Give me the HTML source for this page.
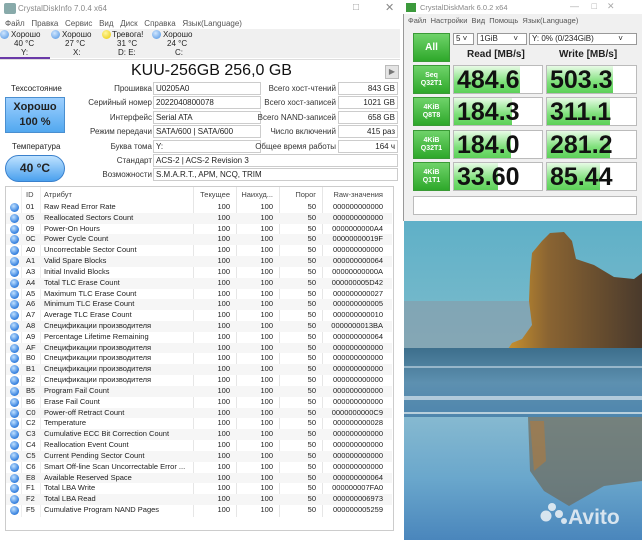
<!DOCTYPE html>
<html><head><meta charset="utf-8"><style>
*{margin:0;padding:0;box-sizing:border-box}
body{width:642px;height:540px;overflow:hidden;background:#fff;position:relative;font-family:"Liberation Sans","DejaVu Sans",sans-serif;font-size:8px;color:#222}
.a{position:absolute;white-space:nowrap}
.lbl{position:absolute;text-align:right;width:150px;font-size:8px;color:#333}
.box{position:absolute;border:1px solid #ccc;height:13px;font-size:8px;line-height:11px;padding:0 2px;background:#fff}
.r{text-align:right}
.row{position:absolute;left:6px;width:386px;height:10.8px;font-size:7.5px;line-height:10.8px}
.row span{position:absolute}
.dot{width:9px;height:9px;border-radius:50%;background:radial-gradient(circle at 40% 35%,#bfe0ff,#3a84e0 65%,#1d5bb8);top:1px;left:4px}
.btn{position:absolute;left:413px;width:37px;background:linear-gradient(#6fd36a,#2ea82a);border:1px solid #3a9a36;color:#fff;font-weight:bold;text-align:center;font-size:7px;line-height:8px}
.cell{position:absolute;height:29px;border:1px solid #bbb;background:#fff;overflow:hidden}
.cell i{position:absolute;left:0;top:0;bottom:0;background:linear-gradient(#e8fbe6,#7ee07a 60%,#5cd058)}
.cell b{position:absolute;left:3px;top:1px;font-size:25px;line-height:27px;color:#111;font-family:"Liberation Sans",sans-serif}
</style></head><body>
<div class="a" style="left:4px;top:3px;width:12px;height:11px;background:#8aa;border-radius:2px"></div>
<div class="a" style="left:18px;top:4px;font-size:8px;color:#888">CrystalDiskInfo 7.0.4 x64</div>
<div class="a" style="left:353px;top:2px;font-size:10px;color:#999">□</div>
<div class="a" style="left:385px;top:1px;font-size:11px;color:#888">✕</div>
<div class="a" style="left:5px;top:19px;font-size:8px;color:#555">Файл&nbsp;&nbsp; Правка&nbsp;&nbsp; Сервис&nbsp;&nbsp; Вид&nbsp;&nbsp; Диск&nbsp;&nbsp; Справка&nbsp;&nbsp; Язык(Language)</div>
<div class="a" style="left:0;top:29px;width:400px;height:29px;background:#f0f0f0"></div>
<div class="a" style="left:0;top:57px;width:50px;height:2px;background:#6a3aa8"></div>
<div class="a" style="left:0;top:59px;width:400px;height:1px;background:#ddd"></div>
<div class="a" style="left:0;top:30px;width:9px;height:9px;border-radius:50%;background:radial-gradient(circle at 40% 35%,#cfe6ff,#4a90e0)"></div>
<div class="a" style="left:11px;top:30px;font-size:8px;color:#222">Хорошо</div>
<div class="a" style="left:14px;top:39px;font-size:8px">40 °C</div><div class="a" style="left:21px;top:48px;font-size:8px">Y:</div>
<div class="a" style="left:51px;top:30px;width:9px;height:9px;border-radius:50%;background:radial-gradient(circle at 40% 35%,#cfe6ff,#4a90e0)"></div>
<div class="a" style="left:62px;top:30px">Хорошо</div><div class="a" style="left:65px;top:39px">27 °C</div><div class="a" style="left:73px;top:48px">X:</div>
<div class="a" style="left:102px;top:30px;width:9px;height:9px;border-radius:50%;background:radial-gradient(circle at 40% 35%,#fff7a0,#e8c800)"></div>
<div class="a" style="left:112px;top:30px">Тревога!</div><div class="a" style="left:117px;top:39px">31 °C</div><div class="a" style="left:118px;top:48px">D: E:</div>
<div class="a" style="left:152px;top:30px;width:9px;height:9px;border-radius:50%;background:radial-gradient(circle at 40% 35%,#cfe6ff,#4a90e0)"></div>
<div class="a" style="left:163px;top:30px">Хорошо</div><div class="a" style="left:167px;top:39px">24 °C</div><div class="a" style="left:175px;top:48px">C:</div>

<div class="a" style="left:131px;top:62px;font-size:16px;color:#111">KUU-256GB 256,0 GB</div>
<div class="a" style="left:385px;top:65px;width:14px;height:14px;background:#e4e4e4;border:1px solid #bbb;color:#777;font-size:8px;text-align:center;line-height:12px">▶</div>

<div class="a" style="left:11px;top:84px;font-size:8px">Техсостояние</div>
<div class="a" style="left:5px;top:97px;width:60px;height:36px;background:linear-gradient(#9ed0ff,#52a8ef);border:1px solid #4a8fd0;text-align:center;font-weight:bold;font-size:11px;line-height:15px;padding-top:2px">Хорошо<br>100 %</div>
<div class="a" style="left:12px;top:142px;font-size:8px">Температура</div>
<div class="a" style="left:5px;top:155px;width:60px;height:27px;border-radius:14px;background:linear-gradient(#bfe2ff,#4aa0ee);border:1px solid #3a80cc;text-align:center;font-weight:bold;font-size:12px;line-height:25px">40 °C</div>

<div class="lbl" style="left:2px;top:84px">Прошивка</div><div class="box" style="left:153px;top:82px;width:108px">U0205A0</div>
<div class="lbl" style="left:2px;top:98px">Серийный номер</div><div class="box" style="left:153px;top:96px;width:108px">2022040800078</div>
<div class="lbl" style="left:2px;top:113px">Интерфейс</div><div class="box" style="left:153px;top:111px;width:108px">Serial ATA</div>
<div class="lbl" style="left:2px;top:127px">Режим передачи</div><div class="box" style="left:153px;top:125px;width:108px">SATA/600 | SATA/600</div>
<div class="lbl" style="left:2px;top:142px">Буква тома</div><div class="box" style="left:153px;top:140px;width:108px">Y:</div>
<div class="lbl" style="left:2px;top:156px">Стандарт</div><div class="box" style="left:153px;top:154px;width:245px">ACS-2 | ACS-2 Revision 3</div>
<div class="lbl" style="left:2px;top:170px">Возможности</div><div class="box" style="left:153px;top:168px;width:245px">S.M.A.R.T., APM, NCQ, TRIM</div>
<div class="lbl" style="left:186px;top:84px">Всего хост-чтений</div><div class="box r" style="left:338px;top:82px;width:60px">843 GB</div>
<div class="lbl" style="left:186px;top:98px">Всего хост-записей</div><div class="box r" style="left:338px;top:96px;width:60px">1021 GB</div>
<div class="lbl" style="left:186px;top:113px">Всего NAND-записей</div><div class="box r" style="left:338px;top:111px;width:60px">658 GB</div>
<div class="lbl" style="left:186px;top:127px">Число включений</div><div class="box r" style="left:338px;top:125px;width:60px">415 раз</div>
<div class="lbl" style="left:186px;top:142px">Общее время работы</div><div class="box r" style="left:338px;top:140px;width:60px">164 ч</div>

<div class="a" style="left:5px;top:186px;width:389px;height:345px;border:1px solid #ccc"></div>
<div class="a" style="left:193px;top:187px;width:1px;height:330px;background:#e6e6e6"></div>
<div class="a" style="left:236px;top:187px;width:1px;height:330px;background:#e6e6e6"></div>
<div class="a" style="left:279px;top:187px;width:1px;height:330px;background:#e6e6e6"></div>
<div class="a" style="left:322px;top:187px;width:1px;height:330px;background:#e6e6e6"></div>
<div class="a" style="left:21px;top:187px;width:1px;height:330px;background:#eee"></div>
<div class="a" style="left:40px;top:187px;width:1px;height:330px;background:#eee"></div>
<div class="row" style="top:190px;color:#444"><span style="left:20px">ID</span><span style="left:38px">Атрибут</span><span style="right:162px">Текущее</span><span style="right:119px">Наихуд...</span><span style="right:76px">Порог</span><span style="right:9px">Raw-значения</span></div>
<div id="rows"></div>
<script>
var d=[["01","Raw Read Error Rate","000000000000"],["05","Reallocated Sectors Count","000000000000"],["09","Power-On Hours","0000000000A4"],["0C","Power Cycle Count","00000000019F"],["A0","Uncorrectable Sector Count","000000000000"],["A1","Valid Spare Blocks","000000000064"],["A3","Initial Invalid Blocks","00000000000A"],["A4","Total TLC Erase Count","000000005D42"],["A5","Maximum TLC Erase Count","000000000027"],["A6","Minimum TLC Erase Count","000000000005"],["A7","Average TLC Erase Count","000000000010"],["A8","Спецификации производителя","0000000013BA"],["A9","Percentage Lifetime Remaining","000000000064"],["AF","Спецификации производителя","000000000000"],["B0","Спецификации производителя","000000000000"],["B1","Спецификации производителя","000000000000"],["B2","Спецификации производителя","000000000000"],["B5","Program Fail Count","000000000000"],["B6","Erase Fail Count","000000000000"],["C0","Power-off Retract Count","0000000000C9"],["C2","Temperature","000000000028"],["C3","Cumulative ECC Bit Correction Count","000000000000"],["C4","Reallocation Event Count","000000000000"],["C5","Current Pending Sector Count","000000000000"],["C6","Smart Off-line Scan Uncorrectable Error ...","000000000000"],["E8","Available Reserved Space","000000000064"],["F1","Total LBA Write","000000007FA0"],["F2","Total LBA Read","000000006973"],["F5","Cumulative Program NAND Pages","000000005259"]];
var h="";d.forEach(function(r,i){h+='<div class="row" style="top:'+(202+i*10.82)+'px;'+(i%2?'background:#f6f6f6':'')+'"><span class="dot"></span><span style="left:20px">'+r[0]+'</span><span style="left:38px">'+r[1]+'</span><span style="right:162px">100</span><span style="right:119px">100</span><span style="right:76px">50</span><span style="right:9px">'+r[2]+'</span></div>'});document.getElementById("rows").innerHTML=h;
</script>

<div class="a" style="left:400px;top:0;width:3px;height:540px;background:#fff"></div>
<div class="a" style="left:403px;top:0;width:239px;height:221px;background:#f0f0f0;border-left:1px solid #999"></div>
<div class="a" style="left:403px;top:0;width:239px;height:14px;background:#fff"></div>
<div class="a" style="left:406px;top:3px;width:10px;height:9px;background:#3c9a3c"></div>
<div class="a" style="left:420px;top:3px;font-size:7.5px;color:#888">CrystalDiskMark 6.0.2 x64</div>
<div class="a" style="left:570px;top:1px;font-size:9px;color:#aaa">—&nbsp;&nbsp;&nbsp;&nbsp; □&nbsp;&nbsp;&nbsp; ✕</div>
<div class="a" style="left:408px;top:16px;font-size:7.5px;color:#555">Файл&nbsp; Настройки&nbsp; Вид&nbsp; Помощь&nbsp; Язык(Language)</div>
<div class="btn" style="top:33px;height:29px;font-size:10px;line-height:27px">All</div>
<div class="a" style="left:453px;top:33px;width:21px;height:12px;border:1px solid #999;background:#fff;font-size:8px;line-height:10px;padding-left:2px">5 ˅</div>
<div class="a" style="left:477px;top:33px;width:50px;height:12px;border:1px solid #999;background:#fff;font-size:8px;line-height:10px;padding-left:2px">1GiB&nbsp;&nbsp;&nbsp;&nbsp;&nbsp;&nbsp; ˅</div>
<div class="a" style="left:529px;top:33px;width:108px;height:12px;border:1px solid #999;background:#fff;font-size:8px;line-height:10px;padding-left:2px">Y: 0% (0/234GiB)&nbsp;&nbsp;&nbsp;&nbsp;&nbsp;&nbsp;&nbsp;&nbsp;&nbsp;&nbsp; ˅</div>
<div class="a" style="left:467px;top:49px;font-size:10px;font-weight:bold;color:#222">Read [MB/s]</div>
<div class="a" style="left:559px;top:49px;font-size:10px;font-weight:bold;color:#222">Write [MB/s]</div>

<div class="btn" style="top:65px;height:29px;padding-top:6px">Seq<br>Q32T1</div>
<div class="cell" style="left:453px;top:65px;width:90px"><i style="width:66px"></i><b>484.6</b></div>
<div class="cell" style="left:546px;top:65px;width:91px"><i style="width:66px"></i><b>503.3</b></div>
<div class="btn" style="top:97px;height:29px;padding-top:6px">4KiB<br>Q8T8</div>
<div class="cell" style="left:453px;top:97px;width:90px"><i style="width:58px"></i><b>184.3</b></div>
<div class="cell" style="left:546px;top:97px;width:91px"><i style="width:63px"></i><b>311.1</b></div>
<div class="btn" style="top:130px;height:29px;padding-top:6px">4KiB<br>Q32T1</div>
<div class="cell" style="left:453px;top:130px;width:90px"><i style="width:57px"></i><b>184.0</b></div>
<div class="cell" style="left:546px;top:130px;width:91px"><i style="width:63px"></i><b>281.2</b></div>
<div class="btn" style="top:162px;height:29px;padding-top:6px">4KiB<br>Q1T1</div>
<div class="cell" style="left:453px;top:162px;width:90px"><i style="width:44px"></i><b>33.60</b></div>
<div class="cell" style="left:546px;top:162px;width:91px"><i style="width:53px"></i><b>85.44</b></div>
<div class="a" style="left:413px;top:196px;width:224px;height:19px;border:1px solid #bbb;background:#fff"></div>

<svg class="a" style="left:404px;top:221px" width="238" height="319" viewBox="0 0 238 319">
<defs>
<linearGradient id="sky" x1="0" y1="0" x2="0" y2="1"><stop offset="0" stop-color="#5fb0c8"/><stop offset=".6" stop-color="#8cc2cc"/><stop offset="1" stop-color="#8a9aa8"/></linearGradient>
<linearGradient id="sea" x1="0" y1="0" x2="0" y2="1"><stop offset="0" stop-color="#3d6f8c"/><stop offset=".5" stop-color="#5d90b0"/><stop offset="1" stop-color="#4e85ad"/></linearGradient>
<linearGradient id="sand" x1="0" y1="0" x2="0" y2="1"><stop offset="0" stop-color="#86b9d0"/><stop offset=".5" stop-color="#6aa7cc"/><stop offset="1" stop-color="#4a86bc"/></linearGradient>
<linearGradient id="rock" x1="0" y1="0" x2="1" y2="0"><stop offset="0" stop-color="#c8912e"/><stop offset=".3" stop-color="#8a6432"/><stop offset="1" stop-color="#4a3a2c"/></linearGradient>
</defs>
<rect width="238" height="319" fill="url(#sky)"/>
<rect y="80" width="238" height="50" fill="#8b9aa6" opacity=".6"/>
<path d="M104 128 L108 122 L118 118 L128 104 L125 80 L126 55 L128 32 L138 20 L146 12 L160 11 L168 20 L172 38 L190 44 L210 56 L230 58 L238 52 L238 130 Z" fill="url(#rock)"/>
<rect y="127" width="238" height="70" fill="url(#sea)"/>
<rect y="145" width="238" height="2" fill="#c8dbe6" opacity=".6"/>
<rect y="175" width="238" height="4" fill="#d8e6ee" opacity=".7"/>
<rect y="191" width="238" height="2" fill="#b8cfdc"/>
<rect y="196" width="238" height="123" fill="url(#sand)"/>
<path d="M124 196 L238 196 L238 260 L200 265 L165 285 L140 270 L126 250 Z" fill="#6e6a5a" opacity=".7"/>
<path d="M126 200 L140 200 L142 240 L130 250 Z" fill="#b07a3c" opacity=".6"/>
<g fill="#e6eef4" opacity=".9"><circle cx="142" cy="295" r="5.5"/><circle cx="148" cy="286" r="4"/><circle cx="155" cy="293" r="4"/><circle cx="160" cy="300" r="3"/></g>
<text x="164" y="303" font-family="Liberation Sans,sans-serif" font-weight="bold" font-size="21" fill="#e6eef4" opacity=".9">Avito</text>
</svg>
</body></html>
